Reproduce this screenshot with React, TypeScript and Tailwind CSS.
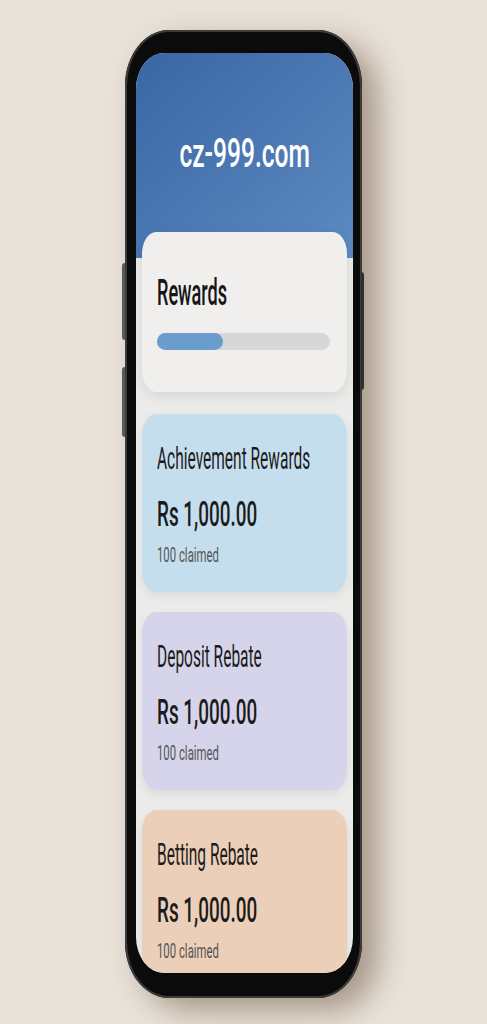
import React from 'react';

interface RewardCardProps {
  title: string;
  amount: string;
  claimed: string;
  color: string;
}

const RewardCard = ({ title, amount, claimed, color }: RewardCardProps) => {
  return (
    <div className={`h-[178px] shrink-0 rounded-[14px/22px] pl-[15px] pt-[29px] shadow-[0_4px_10px_rgba(0,0,0,0.07)] ${color}`}>
      <div className="origin-left scale-x-[0.5] text-[31px] leading-none text-[#1b1b1b] whitespace-nowrap">{title}</div>
      <div className="mt-[23px] origin-left scale-x-[0.54] text-[35px] leading-none font-medium text-[#1b1b1b] whitespace-nowrap">
        {amount}
      </div>
      <div className="mt-[13px] origin-left scale-x-[0.54] text-[21px] leading-none text-[#555555] whitespace-nowrap">{claimed}</div>
    </div>
  );
};

const cards = [
  { title: 'Achievement Rewards', amount: 'Rs 1,000.00', claimed: '100 claimed', color: 'bg-[#c5deed]' },
  { title: 'Deposit Rebate', amount: 'Rs 1,000.00', claimed: '100 claimed', color: 'bg-[#d6d4ea]' },
  { title: 'Betting Rebate', amount: 'Rs 1,000.00', claimed: '100 claimed', color: 'bg-[#eccfb8]' },
];

export default function App() {
  return (
    <div className="min-h-[1024px] w-full bg-[#e9e2d9] pt-[30px] font-['Roboto',sans-serif]">
      <div className="relative mx-auto flex h-[968px] w-[237px] flex-col rounded-[44px/56px] bg-[#0b0b0b] pt-[23px] pb-[25px] pl-[11px] pr-[9px] shadow-[inset_0_0_0_2px_#3c3c3c,16px_12px_30px_rgba(85,60,35,0.45)]">
        {/* side buttons */}
        <div className="absolute left-[-3px] top-[233px] h-[77px] w-[3px] rounded-l bg-[#5a5a5a]" />
        <div className="absolute left-[-3px] top-[337px] h-[70px] w-[3px] rounded-l bg-[#5a5a5a]" />
        <div className="absolute right-[-2px] top-[242px] h-[118px] w-[3px] rounded-r bg-[#2e2e2e]" />

        <div className="flex flex-1 flex-col overflow-hidden rounded-[28px/36px] bg-[#ebebea]">
          <div className="h-[205px] shrink-0 bg-gradient-to-br from-[#3a66a4] to-[#5d8ac1] pt-[80px] text-center">
            <div className="scale-x-[0.6] text-[41px] leading-none font-medium text-white whitespace-nowrap">cz-999.com</div>
          </div>

          <div className="-mt-[26px] flex flex-col px-[6px]">
            <div className="mb-[22px] h-[160px] shrink-0 rounded-[14px/22px] bg-[#f0efed] pl-[15px] pt-[42px] shadow-[0_4px_12px_rgba(0,0,0,0.09)]">
              <div className="origin-left scale-x-[0.49] text-[37px] leading-none font-medium text-[#161616]">Rewards</div>
              <div className="mt-[22px] h-[17px] w-[173px] rounded-full bg-[#d7d7d7]">
                <div className="h-full w-[66px] rounded-full bg-[#6a9ccd]" />
              </div>
            </div>

            <div className="flex flex-col gap-[20px]">
              {cards.map(card => (
                <RewardCard key={card.title} {...card} />
              ))}
            </div>
          </div>
        </div>
      </div>
    </div>
  );
}
